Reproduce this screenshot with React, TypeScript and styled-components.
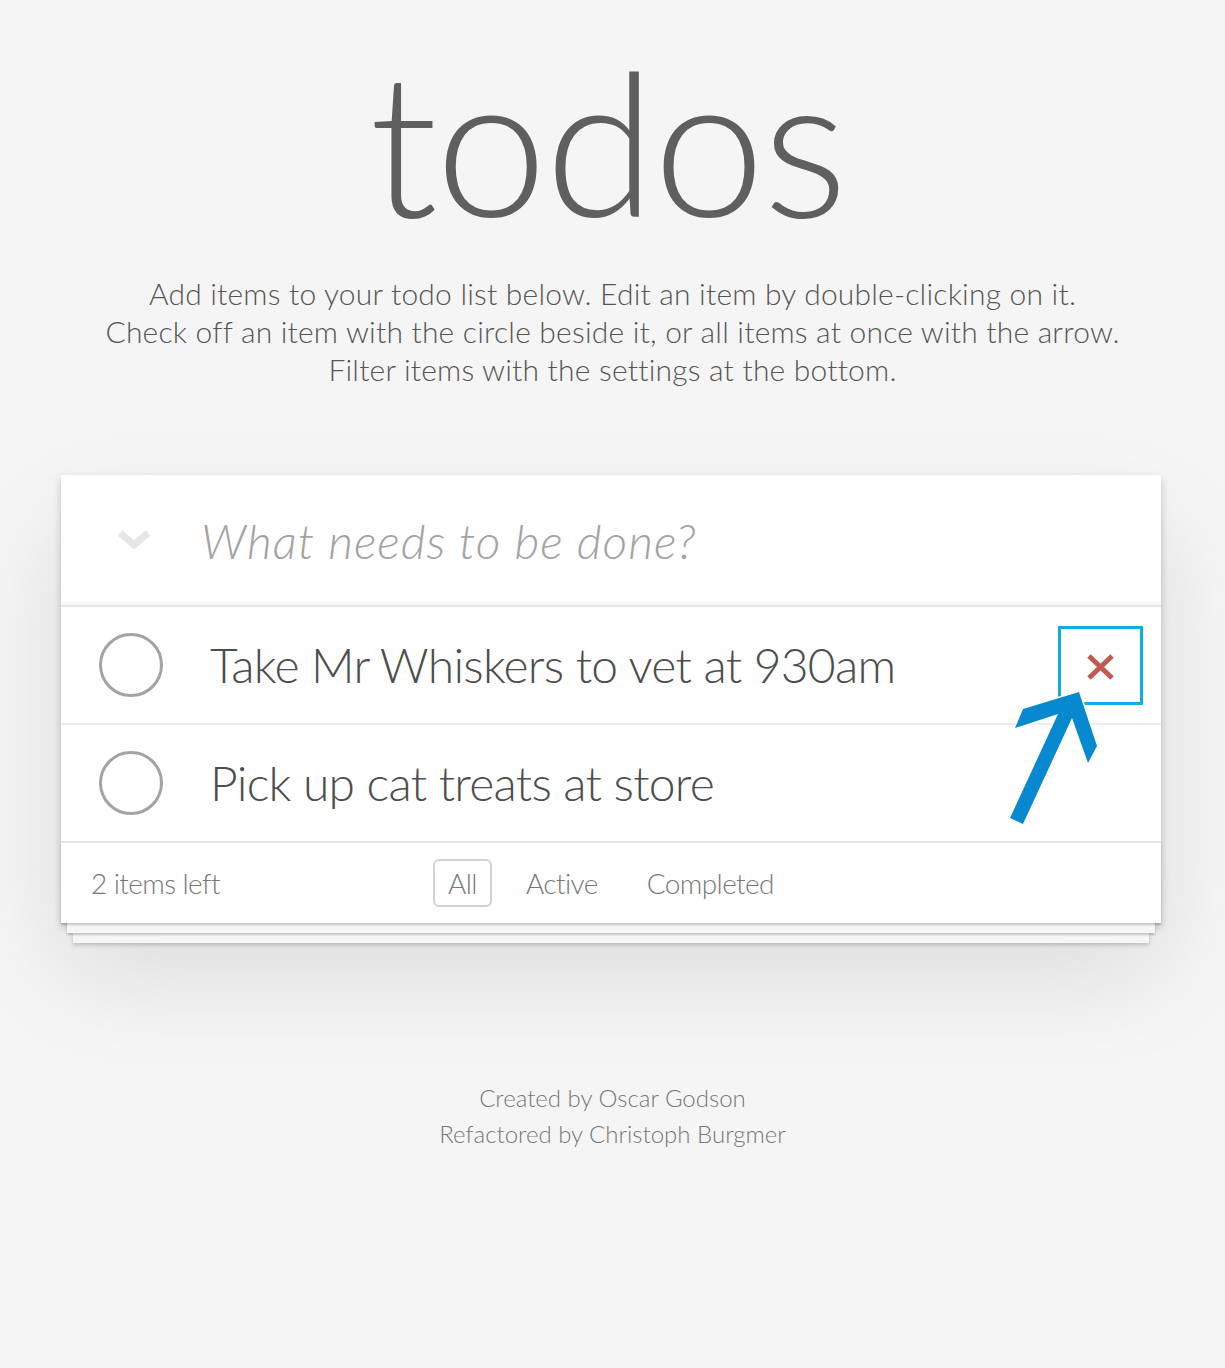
import styled, { createGlobalStyle } from "styled-components";

const GlobalStyle = createGlobalStyle`
    html, body {
        margin: 0;
        padding: 0;
        background: #f5f5f5;
    }
    body {
        font-family: Lato, Roboto, "Liberation Sans", sans-serif;
        font-weight: 300;
        color: #4d4d4d;
        -webkit-font-smoothing: antialiased;
    }
`;

// items shown in the list
const todos = [
    { id: 1, title: "Take Mr Whiskers to vet at 930am", hovered: true },
    { id: 2, title: "Pick up cat treats at store", hovered: false },
];

const filters = ["All", "Active", "Completed"];

const Page = styled.div`
    min-height: 1368px;
    display: flex;
    flex-direction: column;
    align-items: center;
`;

const Title = styled.h1`
    margin: 40px 10px 0 0;
    font-size: 200px;
    line-height: 200px;
    font-weight: 300;
    color: #5f5f5f;
    letter-spacing: -2px;
`;

const Intro = styled.p`
    margin: 34px 0 0;
    font-size: 30px;
    line-height: 38px;
    color: #555;
    text-align: center;
    letter-spacing: 0.2px;
`;

const Card = styled.section`
    position: relative;
    width: 1100px;
    margin: 87px 3px 0 0;
    background: #fff;
    box-shadow: 0 4px 8px 0 rgba(0, 0, 0, 0.2), 0 50px 100px 0 rgba(0, 0, 0, 0.1);
`;

const NewTodoRow = styled.header`
    height: 130px;
    display: flex;
    align-items: center;
    box-shadow: inset 0 -4px 2px rgba(0, 0, 0, 0.03);
`;

const ToggleAll = styled.svg`
    width: 32px;
    height: 20px;
    margin-left: 57px;
    flex: none;
`;

const NewTodoInput = styled.input`
    flex: 1;
    margin-left: 51px;
    border: none;
    outline: none;
    background: transparent;
    font-family: inherit;
    font-weight: 300;
    font-size: 48px;
    color: #4d4d4d;
    padding: 0;
    letter-spacing: 1px;

    &::placeholder {
        font-style: italic;
        color: #a3a3a3;
    }
`;

const TodoList = styled.ul`
    list-style: none;
    margin: 0;
    padding: 0;
    border-top: 2px solid #e6e6e6;
`;

const TodoRow = styled.li`
    height: 116px;
    display: flex;
    align-items: center;
    border-bottom: 2px solid #ededed;

    &:last-child {
        border-bottom: none;
    }
`;

const ToggleCircle = styled.svg`
    width: 66px;
    height: 66px;
    margin-left: 37px;
    flex: none;
`;

const Label = styled.label`
    margin-left: 46px;
    font-size: 48px;
    line-height: 58px;
    color: #4d4d4d;
    letter-spacing: -0.75px;
`;

const DestroyButton = styled.button<{ $visible: boolean }>`
    margin-left: auto;
    margin-right: 18px;
    width: 85px;
    height: 79px;
    box-sizing: border-box;
    display: flex;
    align-items: center;
    justify-content: center;
    background: none;
    padding: 4px 0 0;
    border: 3px solid ${({ $visible }) => ($visible ? "#0bafe7" : "transparent")};
    visibility: ${({ $visible }) => ($visible ? "visible" : "hidden")};
`;

const Footer = styled.footer`
    position: relative;
    height: 80px;
    padding: 0 30px;
    border-top: 2px solid #e6e6e6;
    display: grid;
    grid-template-columns: 1fr auto 1fr;
    align-items: center;
    font-size: 28px;
    color: #777;
    letter-spacing: -0.6px;

    &::before {
        content: "";
        position: absolute;
        left: 0;
        right: 0;
        bottom: 0;
        height: 80px;
        overflow: hidden;
        box-shadow: 0 2px 2px rgba(0, 0, 0, 0.2), 0 16px 0 -6px #f6f6f6,
            0 18px 2px -6px rgba(0, 0, 0, 0.2), 0 32px 0 -12px #f6f6f6,
            0 34px 4px -12px rgba(0, 0, 0, 0.2);
    }
`;

const Count = styled.span`
    position: relative;
`;

const Filters = styled.ul`
    position: relative;
    list-style: none;
    margin: 0;
    padding: 0;
    display: flex;
    gap: 7px;
`;

const FilterLink = styled.a<{ $selected: boolean }>`
    display: block;
    margin: 0 6px;
    padding: 6px 13px;
    border-radius: 6px;
    border: 2px solid ${({ $selected }) => ($selected ? "#d2d2d2" : "transparent")};
    color: #777;
    text-decoration: none;
    line-height: 32px;
`;

const Arrow = styled.svg`
    position: absolute;
    left: 939px;
    top: 205px;
    width: 120px;
    height: 160px;
    pointer-events: none;
`;

const Credits = styled.footer`
    margin-top: 157px;
    font-size: 24px;
    line-height: 36px;
    color: #777;
    text-align: center;
`;

export default function App() {
    return (
        <Page>
            <GlobalStyle />
            <Title>todos</Title>
            <Intro>
                Add items to your todo list below. Edit an item by double-clicking on it.
                <br />
                Check off an item with the circle beside it, or all items at once with the arrow.
                <br />
                Filter items with the settings at the bottom.
            </Intro>

            <Card>
                <NewTodoRow>
                    <ToggleAll viewBox="0 0 32 20">
                        <path d="M2 3 L16 15 L30 3" fill="none" stroke="#e6e6e6" strokeWidth="7" />
                    </ToggleAll>
                    <NewTodoInput placeholder="What needs to be done?" />
                </NewTodoRow>

                <TodoList>
                    {todos.map((t) => (
                        <TodoRow key={t.id}>
                            <ToggleCircle viewBox="0 0 66 66">
                                <circle cx="33" cy="33" r="30.5" fill="none" stroke="#a3a3a3" strokeWidth="3" />
                            </ToggleCircle>
                            <Label>{t.title}</Label>
                            <DestroyButton $visible={t.hovered}>
                                <svg width="29" height="28" viewBox="0 0 29 28">
                                    <path d="M3 3 L26 25 M26 3 L3 25" stroke="#c0594e" strokeWidth="5" />
                                </svg>
                            </DestroyButton>
                        </TodoRow>
                    ))}
                </TodoList>

                <Footer>
                    <Count>2 items left</Count>
                    <Filters>
                        {filters.map((f) => (
                            <li key={f}>
                                <FilterLink href="#" $selected={f === "All"}>
                                    {f}
                                </FilterLink>
                            </li>
                        ))}
                    </Filters>
                </Footer>

                {/* annotation arrow pointing at the delete button */}
                <Arrow viewBox="1000 680 120 160">
                    <polygon
                        points="1079,692 1097,746 1088,763 1072,718 1023,824 1010,818 1058,714 1015,728 1023,709"
                        fill="#0789cf"
                        stroke="#fff"
                        strokeWidth="3"
                        strokeLinejoin="round"
                        paintOrder="stroke"
                    />
                </Arrow>
            </Card>

            <Credits>
                Created by Oscar Godson
                <br />
                Refactored by Christoph Burgmer
            </Credits>
        </Page>
    );
}
